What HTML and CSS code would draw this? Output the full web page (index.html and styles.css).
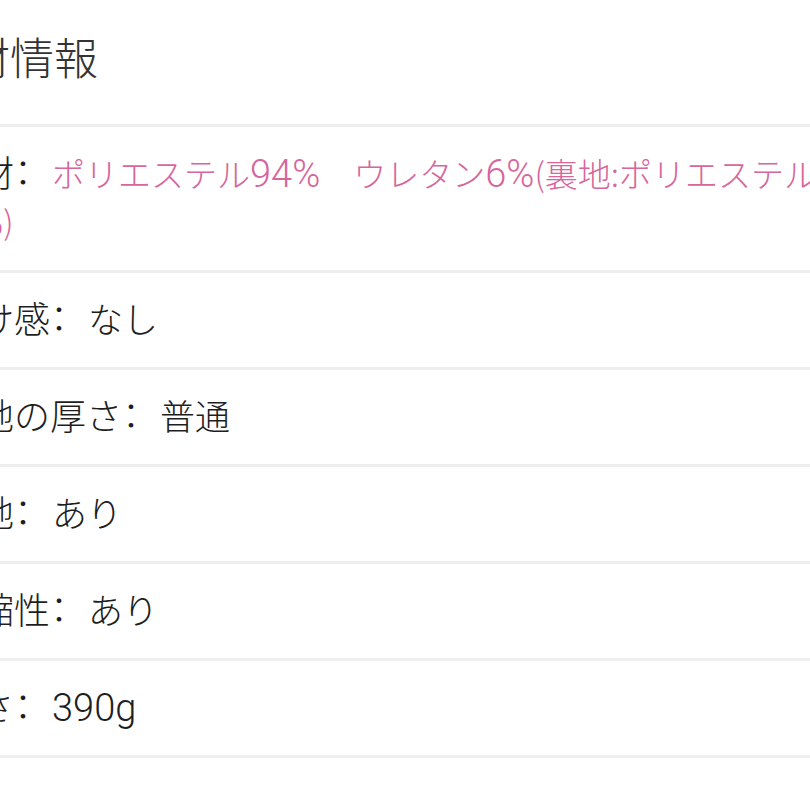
FILE: index.html
```html
<!DOCTYPE html>
<html lang="ja">
<head>
<meta charset="utf-8">
<title>素材情報</title>
<link rel="stylesheet" href="styles.css">
</head>
<body>
<section class="info">
  <h2 class="info-title">素材情報</h2>
  <ul class="info-list">
    <li class="info-row"><span class="label">素材<span class="colon">：</span></span><span class="value value-pink">ポリエステル<span class="num">94%</span>　ウレタン<span class="num">6%</span>(裏地:ポリエステル<span class="num">100%</span>)</span></li>
    <li class="info-row"><span class="label">透け感<span class="colon">：</span></span><span class="value">なし</span></li>
    <li class="info-row"><span class="label">生地の厚さ<span class="colon">：</span></span><span class="value">普通</span></li>
    <li class="info-row"><span class="label">裏地<span class="colon">：</span></span><span class="value">あり</span></li>
    <li class="info-row"><span class="label">伸縮性<span class="colon">：</span></span><span class="value">あり</span></li>
    <li class="info-row"><span class="label">重さ<span class="colon">：</span></span><span class="value"><span class="num">390g</span></span></li>
  </ul>
</section>
</body>
</html>
```

FILE: styles.css
```css
html, body {
  margin: 0;
  padding: 0;
  background: #ffffff;
  overflow: hidden;
}

body {
  font-family: "Noto Sans CJK JP", "Noto Sans", sans-serif;
  font-weight: 300;
  color: #1e1e1e;
}

.info {
  margin-left: -88px;
  width: 958px;
}

.info-title {
  margin: 0;
  padding: 26px 0 38px 10px;
  font-size: 44px;
  line-height: 60px;
  font-weight: 300;
  color: #333333;
}

.info-list {
  list-style: none;
  margin: 0;
  padding: 0;
  border-bottom: 3px solid #eeeeee;
}

.info-row {
  border-top: 3px solid #eeeeee;
  padding: 20px 0 26px;
  font-size: 36px;
  line-height: 48px;
  text-indent: 30px;
}

.info-row:first-child {
  padding-bottom: 27px;
}

.label {
  color: #1e1e1e;
}

.colon {
  font-feature-settings: "halt";
  margin-right: 18px;
}

.value {
  font-size: 35px;
  line-height: 1;
  margin-left: 2px;
  color: #1e1e1e;
}

.value-pink {
  font-size: 33px;
  color: #d6669c;
}

.num {
  font-family: Roboto, "Noto Sans", sans-serif;
  font-weight: 300;
  line-height: 1;
}

.value .num {
  font-size: 38px;
}
```
